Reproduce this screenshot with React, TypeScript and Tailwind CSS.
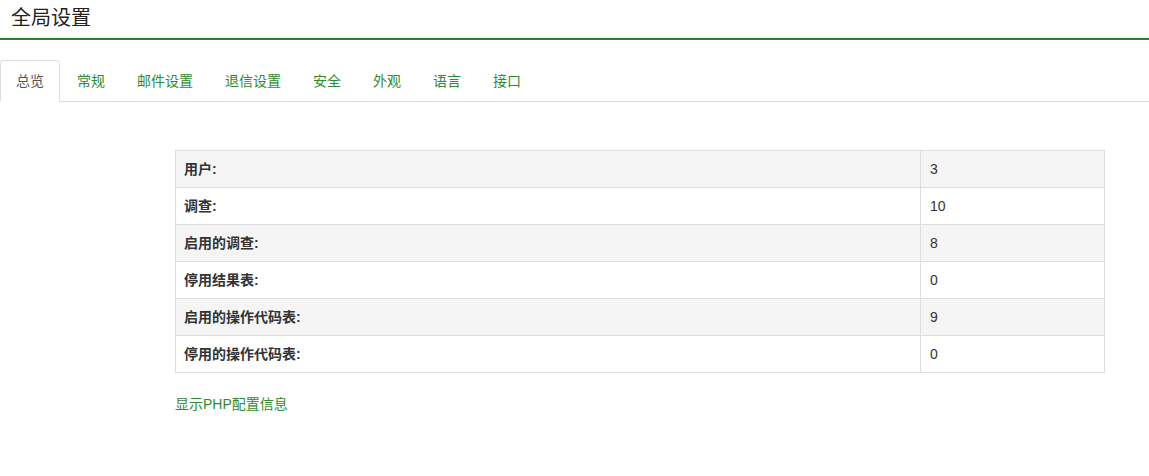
import React from "react";

const font = { fontFamily: '"Liberation Sans", Arial, "Noto Sans CJK SC", sans-serif' };

const tabs = ["总览", "常规", "邮件设置", "退信设置", "安全", "外观", "语言", "接口"];
const rows: [string, string][] = [
  ["用户:", "3"],
  ["调查:", "10"],
  ["启用的调查:", "8"],
  ["停用结果表:", "0"],
  ["启用的操作代码表:", "9"],
  ["停用的操作代码表:", "0"],
];

export default function App() {
  return (
    <div className="w-[1149px] h-[476px] bg-white text-[14px] text-[#333]" style={font}>
      <div className="h-[40px] border-b-2 border-[#2e8130] px-[11px] pt-[6px]">
        <h1 className="text-[20px] leading-[24px] font-normal text-[#222]">全局设置</h1>
      </div>
      <div className="mt-[20px] flex border-b border-[#ddd] h-[42px]">
        {tabs.map((t, i) => (
          <div
            key={t}
            className={
              i === 0
                ? "mr-[2px] px-[15px] py-[10px] leading-[20px] border border-[#ddd] border-b-white rounded-t-[4px] -mb-px bg-white text-[#555]"
                : "mr-[2px] px-[15px] py-[10px] leading-[20px] border-y border-transparent text-[#2e8b2e]"
            }
          >
            {t}
          </div>
        ))}
      </div>
      <div className="pl-[175px] pr-[44px] pt-[48px]">
        <table className="w-[930px] border-collapse border border-[#ddd]">
          <tbody>
            {rows.map(([k, v], i) => (
              <tr key={k} className={i % 2 === 0 ? "bg-[#f5f5f5]" : "bg-white"}>
                <td className="border border-[#ddd] px-[8px] py-[8px] leading-[20px] font-bold w-[745px]">{k}</td>
                <td className="border border-[#ddd] px-[9px] py-[8px] leading-[20px]">{v}</td>
              </tr>
            ))}
          </tbody>
        </table>
        <div className="mt-[21px] leading-[20px] text-[#2e8b2e]">显示PHP配置信息</div>
      </div>
    </div>
  );
}
